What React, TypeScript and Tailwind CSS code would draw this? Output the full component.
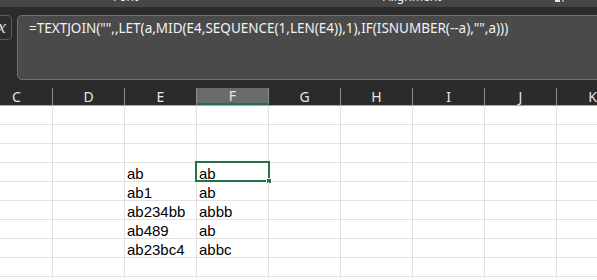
import React from 'react';

const cols = ['C', 'D', 'E', 'F', 'G', 'H', 'I', 'J', 'K'];

// rows 1..9 visible; data sits in E/F from row 4
const data: Record<number, { e: string; f: string }> = {
  3: { e: 'ab', f: 'ab' },
  4: { e: 'ab1', f: 'ab' },
  5: { e: 'ab234bb', f: 'abbb' },
  6: { e: 'ab489', f: 'ab' },
  7: { e: 'ab23bc4', f: 'abbc' },
};

const formula = '=TEXTJOIN("",,LET(a,MID(E4,SEQUENCE(1,LEN(E4)),1),IF(ISNUMBER(--a),"",a)))';

export default function App() {
  return (
    <div className="w-[597px] h-[280px] overflow-hidden bg-white font-['Liberation_Sans',sans-serif]">
      {/* ribbon group labels, mostly scrolled off */}
      <div className="h-[7px] bg-[#464646] overflow-hidden flex text-[12px] leading-[12px] text-[#f0f0f0] font-['Noto_Sans',sans-serif]">
        <span className="-mt-[9px] ml-[113px] w-[270px]">Font</span>
        <span className="-mt-[9px] w-[172px]">Alignment</span>
        <span className="mt-0 w-[5px] h-[2px] bg-[#e8e8e8]" />
        <span className="ml-[2px] w-[2px] h-[2px] bg-[#9a9a9a]" />
      </div>

      {/* formula bar */}
      <div className="bg-[#2b2b2b] pt-[8px] pb-[8px] flex items-start gap-[5px]">
        <div className="-ml-[14px] w-[26px] h-[25px] rounded-[4px] border border-[#5c5c5c] bg-[#2e2e2e] flex items-center justify-center text-[#d8d8d8] italic text-[19px] font-['Liberation_Serif',serif]">
          fx
        </div>
        <div className="flex-1 -mr-[10px] h-[65px] rounded-[5px] border border-[#717171] bg-[#4a4a4a] pl-[11px] pt-[3px] text-[13.5px] leading-[18px] text-[#f2f2f2] font-['Noto_Sans',sans-serif] whitespace-nowrap">
          {formula}
        </div>
      </div>

      {/* column headers */}
      <div className="flex -ml-[19px] h-[18px] bg-[#2b2b2b] border-b border-[#a8a8a8] font-['Noto_Sans',sans-serif] text-[14px] text-[#e6e6e6]">
        {cols.map((c) => (
          <div
            key={c}
            className={`w-[72px] shrink-0 border-r border-[#8c8c8c] flex items-center justify-center leading-none ${
              c === 'F' ? 'bg-[#6a6a6a] border-b-2 border-b-[#217346]' : ''
            }`}
          >
            {c}
          </div>
        ))}
      </div>

      {/* grid */}
      <div className="flex flex-col -ml-[19px]">
        {Array.from({ length: 9 }).map((_, r) => (
          <div key={r} className="flex h-[19px] border-b border-[#e1e1e1]">
            {cols.map((c) => {
              const row = data[r];
              const text = row ? (c === 'E' ? row.e : c === 'F' ? row.f : '') : '';
              const selected = r === 3 && c === 'F';
              return (
                <div
                  key={c}
                  className="relative w-[72px] shrink-0 border-r border-[#e1e1e1] pl-[2px] pt-[2px] text-[15px] leading-[17px] text-black"
                >
                  {text}
                  {selected && (
                    <div className="absolute -left-[2px] -top-[2px] w-[75px] h-[21px] border-2 border-[#217346]">
                      <div className="absolute -right-[4px] -bottom-[4px] w-[6px] h-[6px] bg-[#217346] border border-white" />
                    </div>
                  )}
                </div>
              );
            })}
          </div>
        ))}
      </div>
    </div>
  );
}
